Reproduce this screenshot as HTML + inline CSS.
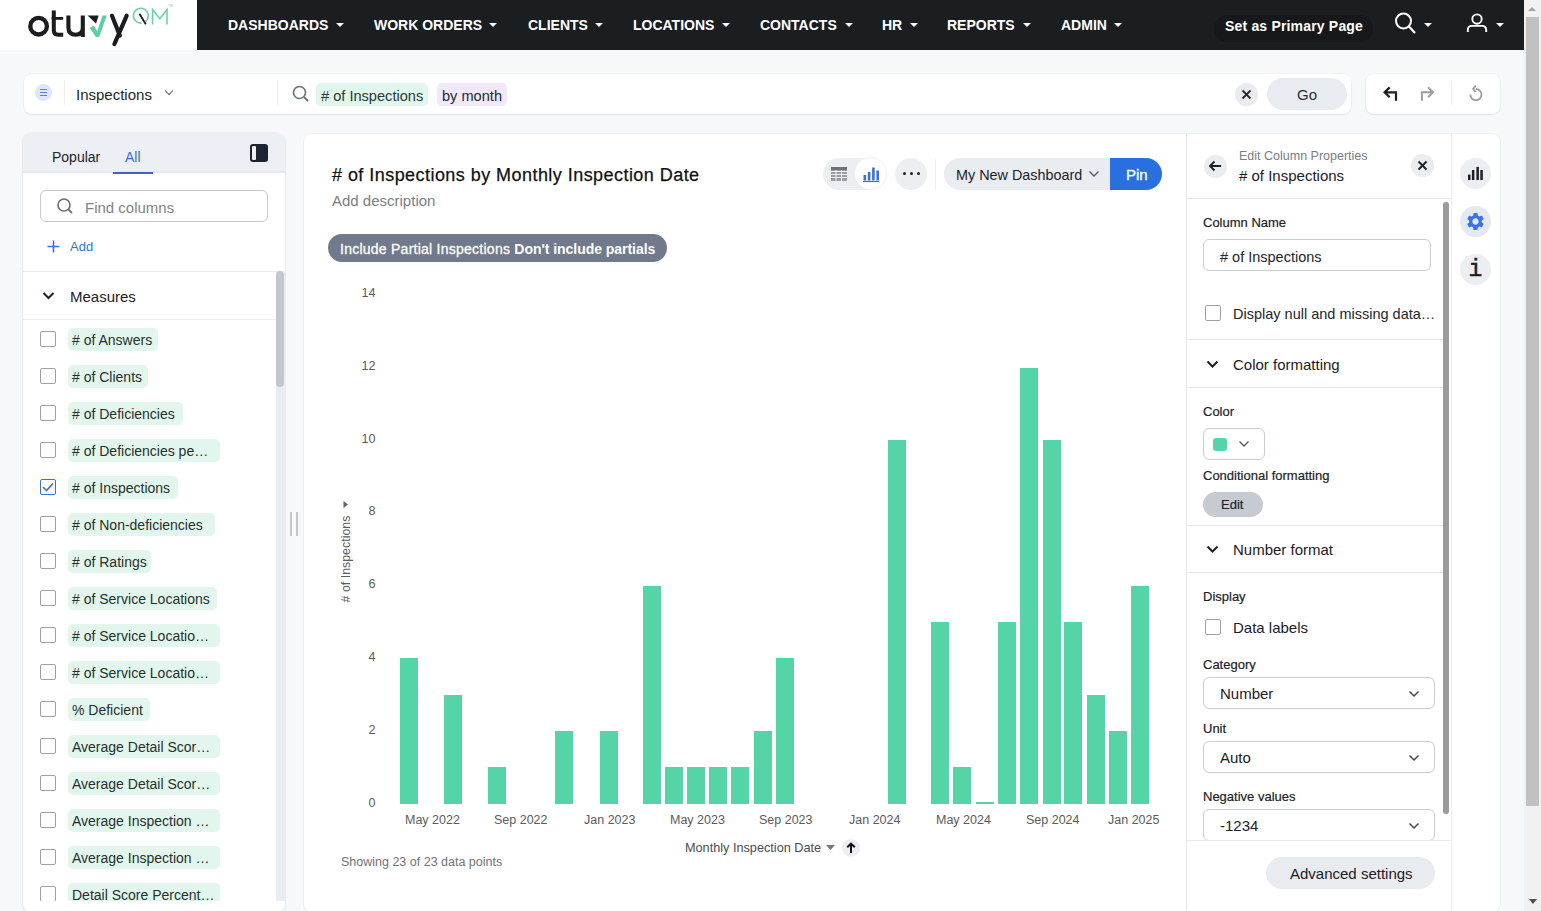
<!DOCTYPE html>
<html><head><meta charset="utf-8">
<style>
*{box-sizing:border-box;margin:0;padding:0}
html,body{width:1541px;height:911px;overflow:hidden;background:#f7f8fa;font-family:"Liberation Sans",sans-serif;color:#1d2228}
.a{position:absolute}
.nav{left:0;top:0;width:1524px;height:50px;background:#1b1e21}
.logo{left:0;top:0;width:197px;height:50px;background:#fff}
.ni{top:17px;font-size:14px;font-weight:bold;color:#fff;white-space:nowrap;line-height:16px}
.car{top:22.5px;width:0;height:0;border-left:4px solid transparent;border-right:4px solid transparent;border-top:4.5px solid #fff}
.sb{left:1524px;top:0;width:17px;height:911px;background:#f1f1f1}
.card{background:#fff;border-radius:8px;box-shadow:0 1px 2px rgba(0,0,0,.08),0 0 0 1px rgba(0,0,0,.02)}
.t15{font-size:15px;line-height:18px;white-space:nowrap}
.t14{font-size:14px;line-height:16px;white-space:nowrap}
.t13{font-size:13px;line-height:15px;white-space:nowrap}
.t12{font-size:12px;line-height:14px;white-space:nowrap}
.chip{border-radius:5px;background:#e2f6ee}
.cb{width:16px;height:16px;border:1px solid #9da0a5;border-radius:2px;background:#fff}
.bar{background:#55d4a8}
.yl{font-size:12.6px;line-height:14px;color:#5b5b5b;text-align:right;width:30px;left:345.5px}
.xl{font-size:12.5px;line-height:14px;color:#5b5b5b;white-space:nowrap}
.lab{font-size:13px;line-height:15px;color:#1d2228;white-space:nowrap;-webkit-text-stroke:0.2px #1d2228}
.sel{border:1px solid #c9ccd1;border-radius:6px;background:#fff}
.chev{width:7px;height:7px;border-right:1.5px solid #555;border-bottom:1.5px solid #555;transform:rotate(45deg)}
.hr{height:1px;background:#e8e9ec}
</style></head><body>
<!-- NAV -->
<div class="a nav"></div>
<div class="a logo"></div>
<svg class="a" style="left:0;top:0" width="197" height="49" viewBox="0 0 197 49">
<g fill="none" stroke="#1c1c1e" stroke-linecap="butt">
<circle cx="38.6" cy="26.2" r="8.3" stroke-width="4.3"/>
<path d="M53.8 10.4V30.5Q53.8 34.7 58.3 34.7H63.2" stroke-width="4"/>
<path d="M51.6 18.4H63.2" stroke-width="2.8"/>
<path d="M68.4 15.6V27.6Q68.4 34.8 75.6 34.8Q82.8 34.8 82.8 27.6V15.6M82.8 20V36.9" stroke-width="4.1"/>
<path d="M112 15.8L119.8 35.5M126.6 15.8L114.4 44" stroke-width="4.2" stroke-linecap="round"/>
<path d="M139.4 13.8L145.8 24.2" stroke-width="1.8"/>
</g>
<path d="M87.6 15.6H98.5L96 23.6Z" fill="#1c1c1e"/>
<path d="M89.8 27.9L93.9 25.4L97.3 31.2L102.5 15.6H106.7L99.2 36.9H95.9Z" fill="#5ccf9c"/>
<g fill="none" stroke="#6dd2a6" stroke-width="1.6">
<path d="M145.2 21.7A7.4 7.4 0 1 0 141.5 23.1"/>
<path d="M152.6 24.4V9.6L159.8 18.8L167 9.6V24.4"/>
</g>
<text x="168.3" y="6.5" font-size="3" fill="#aaa" font-family="Liberation Sans">TM</text>
</svg>

<div class="a ni" style="left:228px">DASHBOARDS</div><div class="a car" style="left:336px"></div>
<div class="a ni" style="left:374px">WORK ORDERS</div><div class="a car" style="left:489px"></div>
<div class="a ni" style="left:528px">CLIENTS</div><div class="a car" style="left:595px"></div>
<div class="a ni" style="left:633px">LOCATIONS</div><div class="a car" style="left:722px"></div>
<div class="a ni" style="left:760px">CONTACTS</div><div class="a car" style="left:845px"></div>
<div class="a ni" style="left:882px">HR</div><div class="a car" style="left:910px"></div>
<div class="a ni" style="left:947px">REPORTS</div><div class="a car" style="left:1023px"></div>
<div class="a ni" style="left:1061px">ADMIN</div><div class="a car" style="left:1114px"></div>

<div class="a" style="left:1214px;top:15px;width:159px;height:27px;border-radius:14px;background:#16181b"></div>
<div class="a ni" style="left:1225px;top:18px;letter-spacing:0.18px">Set as Primary Page</div>
<svg class="a" style="left:1392px;top:11px" width="26" height="26" viewBox="0 0 26 26"><circle cx="11.5" cy="10" r="7.5" fill="none" stroke="#fff" stroke-width="2"/><line x1="17" y1="15.5" x2="23" y2="22" stroke="#fff" stroke-width="2.2"/></svg>
<div class="a car" style="left:1424px;top:23px"></div>
<svg class="a" style="left:1464px;top:11px" width="26" height="24" viewBox="0 0 26 24"><circle cx="13" cy="8.1" r="4.7" fill="none" stroke="#fff" stroke-width="1.9"/><path d="M3.8 21V18.7A3.8 3.8 0 0 1 7.6 14.9H18.4A3.8 3.8 0 0 1 22.2 18.7V21" fill="none" stroke="#fff" stroke-width="1.9"/></svg>
<div class="a car" style="left:1496px;top:23px"></div>

<!-- SCROLLBAR -->
<div class="a sb"></div>
<div class="a" style="left:1526px;top:17px;width:13px;height:789px;background:#c1c1c1"></div>
<div class="a" style="left:1528px;top:7px;width:0;height:0;border-left:4px solid transparent;border-right:4px solid transparent;border-bottom:4px solid #a3a3a3"></div>
<div class="a" style="left:1529px;top:899px;width:0;height:0;border-left:4px solid transparent;border-right:4px solid transparent;border-top:5px solid #505050"></div>

<!-- SEARCH CARD -->
<div class="a card" style="left:24px;top:74px;width:1327px;height:40px"></div>
<div class="a" style="left:35px;top:84px;width:17px;height:17px;border-radius:50%;background:#dfe6f8"></div>
<div class="a" style="left:40px;top:89px;width:7px;height:1px;background:#4a85e8"></div>
<div class="a" style="left:40px;top:92px;width:7px;height:1px;background:#4a85e8"></div>
<div class="a" style="left:40px;top:95px;width:7px;height:1px;background:#4a85e8"></div>
<div class="a" style="left:64px;top:80px;width:1px;height:25px;background:#eceef1"></div>
<div class="a t15" style="left:76px;top:86px;color:#22272e">Inspections</div>
<div class="a chev" style="left:166px;top:88px;width:6px;height:6px;border-color:#666"></div>
<div class="a" style="left:277px;top:80px;width:1px;height:25px;background:#eceef1"></div>
<svg class="a" style="left:292px;top:85px" width="18" height="17" viewBox="0 0 18 17"><circle cx="7.5" cy="7.5" r="6" fill="none" stroke="#6b6f75" stroke-width="1.6"/><line x1="12" y1="12" x2="16" y2="16" stroke="#6b6f75" stroke-width="1.8"/></svg>
<div class="a chip" style="left:316px;top:83px;width:112px;height:23px;background:#e1f6ed"></div>
<div class="a t15" style="left:321px;top:87px;color:#2b3834;font-size:14.6px">#&nbsp;of Inspections</div>
<div class="a chip" style="left:437px;top:83px;width:70px;height:23px;background:#efe9fb"></div>
<div class="a t15" style="left:442px;top:87px;color:#2a2733;font-size:14.6px">by month</div>
<div class="a" style="left:1235px;top:83px;width:23px;height:23px;border-radius:50%;background:#e9ebef"></div>
<svg class="a" style="left:1241px;top:89px" width="11" height="11" viewBox="0 0 11 11"><path d="M1.5 1.5L9.5 9.5M9.5 1.5L1.5 9.5" stroke="#25292e" stroke-width="1.8"/></svg>
<div class="a" style="left:1267px;top:78px;width:80px;height:32px;border-radius:16px;background:#e8ebf0"></div>
<div class="a t15" style="left:1297px;top:86px;color:#2a2e35">Go</div>

<div class="a card" style="left:1366px;top:74px;width:134px;height:40px"></div>
<div class="a" style="left:1451px;top:81px;width:1px;height:24px;background:#eceef1"></div>
<svg class="a" style="left:1376px;top:80px" width="114" height="28" viewBox="0 0 114 28">
<path d="M13.7 7.4L8.6 12.3L13.7 17.3M8.8 12.3H20V20.8" fill="none" stroke="#1c1f24" stroke-width="2.2"/>
<path d="M52.1 7.4L57 12.3L52.1 17.3M56.8 12.3H45.9V20.8" fill="none" stroke="#9a9da2" stroke-width="2"/>
<path d="M94.3 14.6A5.6 5.6 0 1 0 99.9 9" fill="none" stroke="#9a9da2" stroke-width="1.8"/>
<path d="M99.8 5.6L97.1 9L99.8 12.2" fill="none" stroke="#9a9da2" stroke-width="1.8"/>
</svg>


<div class="a" style="left:23px;top:133px;width:262px;height:779px;background:#fff;border-radius:8px;box-shadow:0 0 0 1px rgba(0,0,0,.03),0 1px 3px rgba(0,0,0,.06);overflow:hidden">
<div class="a" style="left:0;top:0;width:262px;height:38px;background:#eceff3"></div>
<div class="a" style="left:0;top:38px;width:262px;height:2px;background:#e6e8ec"></div>
</div>
<div class="a t14" style="left:52px;top:149px;color:#1f2429">Popular</div>
<div class="a t14" style="left:125px;top:149px;color:#3d6fd0">All</div>
<div class="a" style="left:113px;top:172px;width:40px;height:2px;background:#3c66b8"></div>
<div class="a" style="left:250px;top:144px;width:18px;height:18px;border-radius:3px;background:#1e2330"></div>
<div class="a" style="left:252px;top:146px;width:4px;height:14px;background:#eef0f4;border-radius:1px"></div>
<div class="a" style="left:40px;top:190px;width:228px;height:32px;border:1px solid #c6c8cc;border-radius:6px;background:#fff"></div>
<svg class="a" style="left:56px;top:197px" width="18" height="18" viewBox="0 0 18 18"><circle cx="8" cy="8" r="6" fill="none" stroke="#6b6f75" stroke-width="1.6"/><line x1="12.3" y1="12.3" x2="16" y2="16" stroke="#6b6f75" stroke-width="1.8"/></svg>
<div class="a t15" style="left:85px;top:199px;color:#80838a">Find columns</div>
<svg class="a" style="left:47px;top:240px" width="13" height="13" viewBox="0 0 13 13"><path d="M6.5 0.5V12.5M0.5 6.5H12.5" stroke="#3c6fd2" stroke-width="1.6"/></svg>
<div class="a t13" style="left:70px;top:239px;color:#3c6fd2">Add</div>
<div class="a" style="left:23px;top:271px;width:262px;height:1px;background:#e8eaed"></div>
<svg class="a" style="left:42px;top:291px" width="13" height="10" viewBox="0 0 13 10"><path d="M1.5 2L6.5 7L11.5 2" fill="none" stroke="#1d2228" stroke-width="2"/></svg>
<div class="a t15" style="left:70px;top:288px;color:#1d2228">Measures</div>
<div class="a" style="left:23px;top:319px;width:253px;height:1px;background:#eceef1"></div>
<div class="a" style="left:276px;top:271px;width:10px;height:630px;background:#e9ecf1"></div>
<div class="a" style="left:276px;top:271px;width:8px;height:116px;background:#c2c6cf;border-radius:4px"></div>
<div class="a" style="left:23px;top:320px;width:253px;height:581px;overflow:hidden">
<div class="a chip" style="left:45px;top:7.5px;width:90px;height:23px"></div>
<div class="a t14" style="left:49px;top:11.5px;color:#27302d"># of Answers</div>
<div class="a cb" style="left:17px;top:11px"></div>
<div class="a chip" style="left:45px;top:44.5px;width:80px;height:23px"></div>
<div class="a t14" style="left:49px;top:48.5px;color:#27302d"># of Clients</div>
<div class="a cb" style="left:17px;top:48px"></div>
<div class="a chip" style="left:45px;top:81.5px;width:115px;height:23px"></div>
<div class="a t14" style="left:49px;top:85.5px;color:#27302d"># of Deficiencies</div>
<div class="a cb" style="left:17px;top:85px"></div>
<div class="a chip" style="left:45px;top:118.5px;width:152px;height:23px"></div>
<div class="a t14" style="left:49px;top:122.5px;color:#27302d"># of Deficiencies pe…</div>
<div class="a cb" style="left:17px;top:122px"></div>
<div class="a chip" style="left:45px;top:155.5px;width:110px;height:23px"></div>
<div class="a t14" style="left:49px;top:159.5px;color:#27302d"># of Inspections</div>
<div class="a cb" style="left:17px;top:159px;border-color:#3d6fd0"></div>
<svg class="a" style="left:19px;top:162px" width="12" height="10" viewBox="0 0 12 10"><path d="M1 5L4.5 8.5L11 1.5" fill="none" stroke="#3d6fd0" stroke-width="1.6"/></svg>
<div class="a chip" style="left:45px;top:192.5px;width:147px;height:23px"></div>
<div class="a t14" style="left:49px;top:196.5px;color:#27302d"># of Non-deficiencies</div>
<div class="a cb" style="left:17px;top:196px"></div>
<div class="a chip" style="left:45px;top:229.5px;width:83px;height:23px"></div>
<div class="a t14" style="left:49px;top:233.5px;color:#27302d"># of Ratings</div>
<div class="a cb" style="left:17px;top:233px"></div>
<div class="a chip" style="left:45px;top:266.5px;width:149px;height:23px"></div>
<div class="a t14" style="left:49px;top:270.5px;color:#27302d"># of Service Locations</div>
<div class="a cb" style="left:17px;top:270px"></div>
<div class="a chip" style="left:45px;top:303.5px;width:152px;height:23px"></div>
<div class="a t14" style="left:49px;top:307.5px;color:#27302d"># of Service Locatio…</div>
<div class="a cb" style="left:17px;top:307px"></div>
<div class="a chip" style="left:45px;top:340.5px;width:152px;height:23px"></div>
<div class="a t14" style="left:49px;top:344.5px;color:#27302d"># of Service Locatio…</div>
<div class="a cb" style="left:17px;top:344px"></div>
<div class="a chip" style="left:45px;top:377.5px;width:82px;height:23px"></div>
<div class="a t14" style="left:49px;top:381.5px;color:#27302d">% Deficient</div>
<div class="a cb" style="left:17px;top:381px"></div>
<div class="a chip" style="left:45px;top:414.5px;width:152px;height:23px"></div>
<div class="a t14" style="left:49px;top:418.5px;color:#27302d">Average Detail Scor…</div>
<div class="a cb" style="left:17px;top:418px"></div>
<div class="a chip" style="left:45px;top:451.5px;width:152px;height:23px"></div>
<div class="a t14" style="left:49px;top:455.5px;color:#27302d">Average Detail Scor…</div>
<div class="a cb" style="left:17px;top:455px"></div>
<div class="a chip" style="left:45px;top:488.5px;width:152px;height:23px"></div>
<div class="a t14" style="left:49px;top:492.5px;color:#27302d">Average Inspection …</div>
<div class="a cb" style="left:17px;top:492px"></div>
<div class="a chip" style="left:45px;top:525.5px;width:152px;height:23px"></div>
<div class="a t14" style="left:49px;top:529.5px;color:#27302d">Average Inspection …</div>
<div class="a cb" style="left:17px;top:529px"></div>
<div class="a chip" style="left:45px;top:562.5px;width:152px;height:23px"></div>
<div class="a t14" style="left:49px;top:566.5px;color:#27302d">Detail Score Percent…</div>
<div class="a cb" style="left:17px;top:566px"></div>
</div>
<div class="a" style="left:290px;top:512px;width:2px;height:24px;background:#c3c6cb"></div>
<div class="a" style="left:296px;top:512px;width:2px;height:24px;background:#c3c6cb"></div><div class="a" style="left:304px;top:134px;width:1196px;height:778px;background:#fff;border-radius:8px;box-shadow:0 0 0 1px rgba(0,0,0,.03),0 1px 2px rgba(0,0,0,.04)"></div>
<div class="a" style="left:332px;top:165px;font-size:18px;line-height:21px;color:#111;white-space:nowrap;letter-spacing:0.45px;-webkit-text-stroke:0.25px #111">#&nbsp;of Inspections by Monthly Inspection Date</div>
<div class="a t15" style="left:332px;top:192px;color:#7b7e83">Add description</div>
<div class="a" style="left:328px;top:234px;width:339px;height:28px;border-radius:14px;background:#717a8a"></div>
<div class="a t14" style="left:340px;top:241px;color:#fff;letter-spacing:0.25px;-webkit-text-stroke:0.3px #fff">Include Partial Inspections <b style="letter-spacing:-0.04px;-webkit-text-stroke:0">Don't include partials</b></div>
<div class="a" style="left:823px;top:158px;width:63px;height:32px;border-radius:16px;background:#eceef1"></div>
<svg class="a" style="left:830px;top:165px" width="18" height="18" viewBox="0 0 18 18"><rect x="1" y="2" width="16" height="14" fill="#9a9da2"/><path d="M1 6.5H17M1 9.5H17M1 12.5H17M6 5V16M11.5 5V16" stroke="#eceef1" stroke-width="1"/><rect x="1" y="2" width="16" height="3" fill="#6f7378"/></svg>
<div class="a" style="left:855px;top:158px;width:31px;height:31px;border-radius:50%;background:#fff;box-shadow:0 0 0 1px #eef0f3"></div>
<svg class="a" style="left:862px;top:165px" width="18" height="18" viewBox="0 0 18 18"><path d="M1 16.5H17" stroke="#3a73d9" stroke-width="1.2"/><rect x="1.5" y="10" width="2.6" height="5.5" fill="#3a73d9"/><rect x="5.8" y="7" width="2.6" height="8.5" fill="#3a73d9"/><rect x="10.1" y="2.5" width="2.6" height="13" fill="#3a73d9"/><rect x="14.4" y="5.5" width="2.6" height="10" fill="#3a73d9"/></svg>
<div class="a" style="left:895px;top:158px;width:32px;height:32px;border-radius:50%;background:#eceef1"></div>
<div class="a" style="left:903px;top:172px;width:3px;height:3px;border-radius:50%;background:#1f2329"></div>
<div class="a" style="left:910px;top:172px;width:3px;height:3px;border-radius:50%;background:#1f2329"></div>
<div class="a" style="left:917px;top:172px;width:3px;height:3px;border-radius:50%;background:#1f2329"></div>
<div class="a" style="left:935px;top:159px;width:1px;height:31px;background:#eceef1"></div>
<div class="a" style="left:944px;top:158px;width:167px;height:32px;border-radius:16px 0 0 16px;background:#e9ecf0"></div>
<div class="a" style="left:1110px;top:158px;width:52px;height:32px;border-radius:0 16px 16px 0;background:#2a6fe0"></div>
<div class="a t15" style="left:956px;top:166px;color:#1f232a;font-size:14.4px">My New Dashboard</div>
<svg class="a" style="left:1088px;top:170px" width="12" height="8" viewBox="0 0 12 8"><path d="M1.5 1.5L6 6L10.5 1.5" fill="none" stroke="#555a61" stroke-width="1.4"/></svg>
<div class="a t15" style="left:1126px;top:166px;color:#fff;-webkit-text-stroke:0.3px #fff">Pin</div>
<div class="a yl" style="top:285.6px">14</div>
<div class="a yl" style="top:359px">12</div>
<div class="a yl" style="top:431.5px">10</div>
<div class="a yl" style="top:504.3px">8</div>
<div class="a yl" style="top:577.3px">6</div>
<div class="a yl" style="top:650.3px">4</div>
<div class="a yl" style="top:723.3px">2</div>
<div class="a yl" style="top:796.3px">0</div>
<div class="a" style="left:286px;top:552px;width:120px;height:14px;font-size:12.4px;line-height:14px;color:#5a5d61;text-align:center;transform:rotate(-90deg);white-space:nowrap">#&nbsp;of Inspections</div>
<svg class="a" style="left:342px;top:500px" width="7" height="9" viewBox="0 0 7 9"><path d="M1.5 1L6 4.5L1.5 8Z" fill="#666"/></svg>
<div class="a bar" style="left:400px;top:658.4px;width:18px;height:145.4px"></div>
<div class="a bar" style="left:444px;top:694.8px;width:18px;height:109.0px"></div>
<div class="a bar" style="left:488px;top:767.4px;width:18px;height:36.4px"></div>
<div class="a bar" style="left:555px;top:731.1px;width:18px;height:72.7px"></div>
<div class="a bar" style="left:600px;top:731.1px;width:18px;height:72.7px"></div>
<div class="a bar" style="left:643px;top:585.7px;width:18px;height:218.1px"></div>
<div class="a bar" style="left:665px;top:767.4px;width:18px;height:36.4px"></div>
<div class="a bar" style="left:687px;top:767.4px;width:18px;height:36.4px"></div>
<div class="a bar" style="left:709px;top:767.4px;width:18px;height:36.4px"></div>
<div class="a bar" style="left:731px;top:767.4px;width:18px;height:36.4px"></div>
<div class="a bar" style="left:754px;top:731.1px;width:18px;height:72.7px"></div>
<div class="a bar" style="left:776px;top:658.4px;width:18px;height:145.4px"></div>
<div class="a bar" style="left:888px;top:440.3px;width:18px;height:363.5px"></div>
<div class="a bar" style="left:931px;top:622.0px;width:18px;height:181.8px"></div>
<div class="a bar" style="left:953px;top:767.4px;width:18px;height:36.4px"></div>
<div class="a bar" style="left:976px;top:801.8px;width:18px;height:2.0px"></div>
<div class="a bar" style="left:998px;top:622.0px;width:18px;height:181.8px"></div>
<div class="a bar" style="left:1020px;top:367.6px;width:18px;height:436.2px"></div>
<div class="a bar" style="left:1043px;top:440.3px;width:18px;height:363.5px"></div>
<div class="a bar" style="left:1064px;top:622.0px;width:18px;height:181.8px"></div>
<div class="a bar" style="left:1087px;top:694.8px;width:18px;height:109.0px"></div>
<div class="a bar" style="left:1109px;top:731.1px;width:18px;height:72.7px"></div>
<div class="a bar" style="left:1131px;top:585.7px;width:18px;height:218.1px"></div>
<div class="a xl" style="left:405px;top:813px">May 2022</div>
<div class="a xl" style="left:494px;top:813px">Sep 2022</div>
<div class="a xl" style="left:584px;top:813px">Jan 2023</div>
<div class="a xl" style="left:670px;top:813px">May 2023</div>
<div class="a xl" style="left:759px;top:813px">Sep 2023</div>
<div class="a xl" style="left:849px;top:813px">Jan 2024</div>
<div class="a xl" style="left:936px;top:813px">May 2024</div>
<div class="a xl" style="left:1026px;top:813px">Sep 2024</div>
<div class="a xl" style="left:1108px;top:813px">Jan 2025</div>
<div class="a" style="left:685px;top:841px;font-size:12.7px;line-height:15px;color:#4a4d52;white-space:nowrap">Monthly Inspection Date</div>
<svg class="a" style="left:826px;top:845px" width="9" height="5" viewBox="0 0 9 5"><path d="M0 0H9L4.5 5Z" fill="#777"/></svg>
<div class="a" style="left:842px;top:839px;width:18px;height:18px;border-radius:50%;background:#eceef3"></div>
<svg class="a" style="left:845px;top:841px" width="12" height="14" viewBox="0 0 12 14"><path d="M6 12V3M2.2 6.3L6 2.6L9.8 6.3" fill="none" stroke="#111" stroke-width="2"/></svg>
<div class="a" style="left:341px;top:855px;font-size:12.5px;line-height:15px;color:#707378;white-space:nowrap">Showing 23 of 23 data points</div>
<div class="a" style="left:1186px;top:134px;width:1px;height:777px;background:#e6e8eb"></div>
<div class="a" style="left:1451px;top:134px;width:1px;height:777px;background:#eceef0"></div>
<div class="a" style="left:1187px;top:198px;width:264px;height:1px;background:#e6e8eb"></div>
<div class="a" style="left:1204px;top:155px;width:23px;height:23px;border-radius:50%;background:#eaecf0"></div>
<svg class="a" style="left:1208px;top:160px" width="14" height="12" viewBox="0 0 14 12"><path d="M13 6H2M6.5 1.5L2 6L6.5 10.5" fill="none" stroke="#1c2026" stroke-width="1.8"/></svg>
<div class="a" style="left:1239px;top:149px;font-size:12.5px;line-height:14px;color:#7a7d82;white-space:nowrap">Edit Column Properties</div>
<div class="a" style="left:1239px;top:167px;font-size:15px;line-height:17px;color:#1c2026;white-space:nowrap">#&nbsp;of Inspections</div>
<div class="a" style="left:1411px;top:154px;width:23px;height:23px;border-radius:50%;background:#eaecf0"></div>
<svg class="a" style="left:1417px;top:160px" width="11" height="11" viewBox="0 0 11 11"><path d="M1.5 1.5L9.5 9.5M9.5 1.5L1.5 9.5" stroke="#1c2026" stroke-width="1.8"/></svg>
<div class="a" style="left:1443px;top:202px;width:6px;height:612px;border-radius:3px;background:#9b9b9b"></div>
<div class="a lab" style="left:1203px;top:215px">Column Name</div>
<div class="a sel" style="left:1203px;top:239px;width:228px;height:32px"></div>
<div class="a" style="left:1220px;top:249px;font-size:14.5px;line-height:17px;color:#22262c;white-space:nowrap">#&nbsp;of Inspections</div>
<div class="a cb" style="left:1205px;top:305px;width:16px;height:16px"></div>
<div class="a" style="left:1233px;top:306px;font-size:14.5px;line-height:17px;color:#22262c;white-space:nowrap">Display null and missing data…</div>
<div class="a hr" style="left:1187px;top:339px;width:256px"></div>
<svg class="a" style="left:1206px;top:360px" width="13" height="9" viewBox="0 0 13 9"><path d="M1.5 1.5L6.5 6.5L11.5 1.5" fill="none" stroke="#1c2026" stroke-width="2"/></svg>
<div class="a t15" style="left:1233px;top:356px;color:#1c2026">Color formatting</div>
<div class="a hr" style="left:1187px;top:387px;width:256px"></div>
<div class="a lab" style="left:1203px;top:404px">Color</div>
<div class="a sel" style="left:1203px;top:428px;width:62px;height:32px"></div>
<div class="a" style="left:1213px;top:438px;width:14px;height:13px;border-radius:3px;background:#55d4a8"></div>
<svg class="a" style="left:1238px;top:440px" width="12" height="8" viewBox="0 0 12 8"><path d="M1.5 1.5L6 6L10.5 1.5" fill="none" stroke="#555a61" stroke-width="1.4"/></svg>
<div class="a lab" style="left:1203px;top:468px">Conditional formatting</div>
<div class="a" style="left:1203px;top:492px;width:60px;height:25px;border-radius:13px;background:#c6cbd3"></div>
<div class="a lab" style="left:1221px;top:497px">Edit</div>
<div class="a hr" style="left:1187px;top:525px;width:256px"></div>
<svg class="a" style="left:1206px;top:545px" width="13" height="9" viewBox="0 0 13 9"><path d="M1.5 1.5L6.5 6.5L11.5 1.5" fill="none" stroke="#1c2026" stroke-width="2"/></svg>
<div class="a t15" style="left:1233px;top:541px;color:#1c2026">Number format</div>
<div class="a hr" style="left:1187px;top:572px;width:256px"></div>
<div class="a lab" style="left:1203px;top:589px">Display</div>
<div class="a cb" style="left:1205px;top:619px;width:16px;height:16px"></div>
<div class="a t15" style="left:1233px;top:619px;color:#1c2026">Data labels</div>
<div class="a lab" style="left:1203px;top:657px">Category</div>
<div class="a" style="left:1187px;top:677px;width:256px;height:164px;overflow:hidden">
<div class="a sel" style="left:16px;top:0px;width:232px;height:32px"></div>
<div class="a t15" style="left:33px;top:8px;color:#1c2026">Number</div>
<svg class="a" style="left:221px;top:13px" width="12" height="8" viewBox="0 0 12 8"><path d="M1.5 1.5L6 6L10.5 1.5" fill="none" stroke="#444" stroke-width="1.5"/></svg>
<div class="a sel" style="left:16px;top:64px;width:232px;height:32px"></div>
<div class="a t15" style="left:33px;top:72px;color:#1c2026">Auto</div>
<svg class="a" style="left:221px;top:77px" width="12" height="8" viewBox="0 0 12 8"><path d="M1.5 1.5L6 6L10.5 1.5" fill="none" stroke="#444" stroke-width="1.5"/></svg>
<div class="a sel" style="left:16px;top:132px;width:232px;height:32px"></div>
<div class="a t15" style="left:33px;top:140px;color:#1c2026">-1234</div>
<svg class="a" style="left:221px;top:145px" width="12" height="8" viewBox="0 0 12 8"><path d="M1.5 1.5L6 6L10.5 1.5" fill="none" stroke="#444" stroke-width="1.5"/></svg>
</div>
<div class="a lab" style="left:1203px;top:721px">Unit</div>
<div class="a lab" style="left:1203px;top:789px">Negative values</div>
<div class="a hr" style="left:1187px;top:840px;width:264px"></div>
<div class="a" style="left:1266px;top:857px;width:169px;height:32px;border-radius:16px;background:#e8ebf0"></div>
<div class="a t15" style="left:1290px;top:865px;color:#1c2026">Advanced settings</div>
<div class="a" style="left:1460px;top:158px;width:31px;height:31px;border-radius:50%;background:#eceef1"></div>
<svg class="a" style="left:1455px;top:150px" width="40" height="40" viewBox="0 0 40 40"><rect x="13" y="24.6" width="2.5" height="5.4" fill="#1c2026"/><rect x="16.9" y="20" width="2.5" height="10" fill="#1c2026"/><rect x="21.4" y="16.9" width="2.5" height="13.1" fill="#1c2026"/><rect x="25.3" y="20" width="2.5" height="10" fill="#1c2026"/></svg>
<div class="a" style="left:1460px;top:206px;width:31px;height:31px;border-radius:50%;background:#e3e8f3"></div>
<svg class="a" style="left:1465px;top:211px" width="21" height="21" viewBox="0 0 24 24"><path fill="#3a74de" d="M19.14 12.94c.04-.3.06-.61.06-.94 0-.32-.02-.64-.07-.94l2.03-1.58a.49.49 0 0 0 .12-.61l-1.92-3.32a.49.49 0 0 0-.59-.22l-2.39.96c-.5-.38-1.03-.7-1.62-.94l-.36-2.54a.48.48 0 0 0-.48-.41h-3.84c-.24 0-.43.17-.47.41l-.36 2.54c-.59.24-1.13.57-1.62.94l-2.39-.96a.48.48 0 0 0-.59.22L2.74 8.87c-.12.21-.08.47.12.61l2.03 1.58c-.05.3-.09.63-.09.94s.02.64.07.94l-2.03 1.58a.49.49 0 0 0-.12.61l1.92 3.32c.12.22.37.29.59.22l2.39-.96c.5.38 1.03.7 1.62.94l.36 2.54c.05.24.24.41.48.41h3.84c.24 0 .44-.17.47-.41l.36-2.54c.59-.24 1.13-.56 1.62-.94l2.39.96c.22.08.47 0 .59-.22l1.92-3.32c.12-.22.07-.47-.12-.61l-2.01-1.58zM12 15.6c-1.98 0-3.6-1.62-3.6-3.6s1.62-3.6 3.6-3.6 3.6 1.62 3.6 3.6-1.62 3.6-3.6 3.6z"/></svg>
<div class="a" style="left:1460px;top:254px;width:31px;height:31px;border-radius:50%;background:#eceef1"></div>
<div class="a" style="left:1468px;top:258px;font-family:'Liberation Mono',monospace;font-weight:normal;-webkit-text-stroke:0.5px #1c2026;font-size:23px;line-height:24px;color:#1c2026;width:15px;text-align:center">i</div></body></html>
